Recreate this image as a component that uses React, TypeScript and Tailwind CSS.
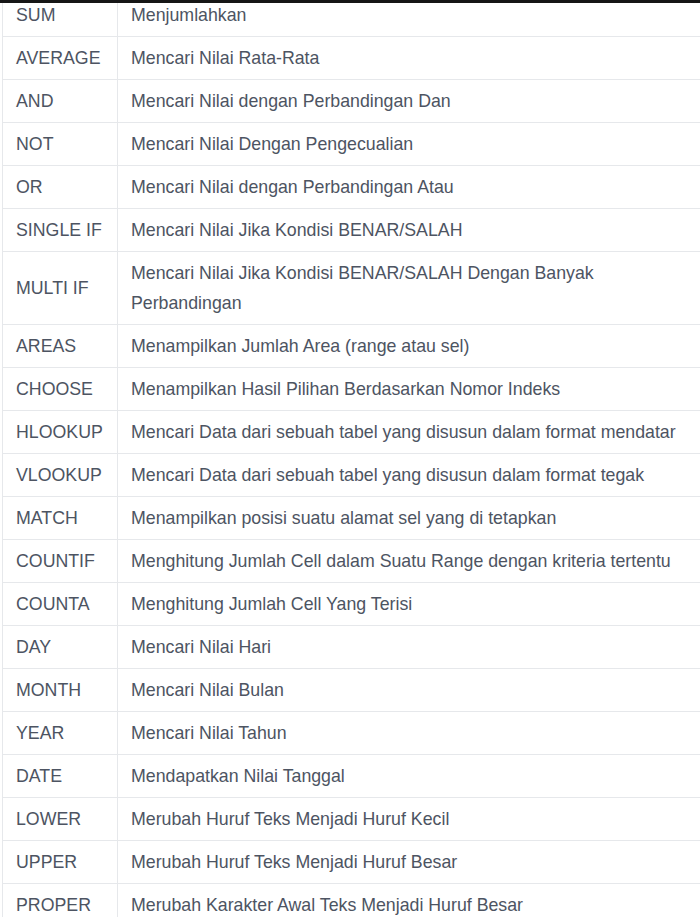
import React from 'react';

const rows: [string, string][] = [
  ['SUM', 'Menjumlahkan'],
  ['AVERAGE', 'Mencari Nilai Rata-Rata'],
  ['AND', 'Mencari Nilai dengan Perbandingan Dan'],
  ['NOT', 'Mencari Nilai Dengan Pengecualian'],
  ['OR', 'Mencari Nilai dengan Perbandingan Atau'],
  ['SINGLE IF', 'Mencari Nilai Jika Kondisi BENAR/SALAH'],
  ['MULTI IF', 'Mencari Nilai Jika Kondisi BENAR/SALAH Dengan Banyak Perbandingan'],
  ['AREAS', 'Menampilkan Jumlah Area (range atau sel)'],
  ['CHOOSE', 'Menampilkan Hasil Pilihan Berdasarkan Nomor Indeks'],
  ['HLOOKUP', 'Mencari Data dari sebuah tabel yang disusun dalam format mendatar'],
  ['VLOOKUP', 'Mencari Data dari sebuah tabel yang disusun dalam format tegak'],
  ['MATCH', 'Menampilkan posisi suatu alamat sel yang di tetapkan'],
  ['COUNTIF', 'Menghitung Jumlah Cell dalam Suatu Range dengan kriteria tertentu'],
  ['COUNTA', 'Menghitung Jumlah Cell Yang Terisi'],
  ['DAY', 'Mencari Nilai Hari'],
  ['MONTH', 'Mencari Nilai Bulan'],
  ['YEAR', 'Mencari Nilai Tahun'],
  ['DATE', 'Mendapatkan Nilai Tanggal'],
  ['LOWER', 'Merubah Huruf Teks Menjadi Huruf Kecil'],
  ['UPPER', 'Merubah Huruf Teks Menjadi Huruf Besar'],
  ['PROPER', 'Merubah Karakter Awal Teks Menjadi Huruf Besar'],
];

export default function App() {
  return (
    <div className="relative w-[700px] h-[917px] overflow-hidden bg-white font-['Liberation_Sans',Arial,sans-serif]">
      <div className="absolute top-0 left-0 right-0 h-[3px] bg-[#161616]" />
      <table className="-mt-[7px] ml-[2px] w-[703px] table-fixed border-collapse text-[17.75px] text-[#4d5462]">
        <colgroup>
          <col className="w-[115px]" />
          <col />
        </colgroup>
        <tbody>
          {rows.map(([fn, desc]) => (
            <tr key={fn}>
              <td className="border border-[#e6e8eb] px-[13px] py-[6px] leading-[30px] align-middle">{fn}</td>
              <td className="border border-[#e6e8eb] px-[13px] py-[6px] leading-[30px] align-middle">{desc}</td>
            </tr>
          ))}
        </tbody>
      </table>
    </div>
  );
}
